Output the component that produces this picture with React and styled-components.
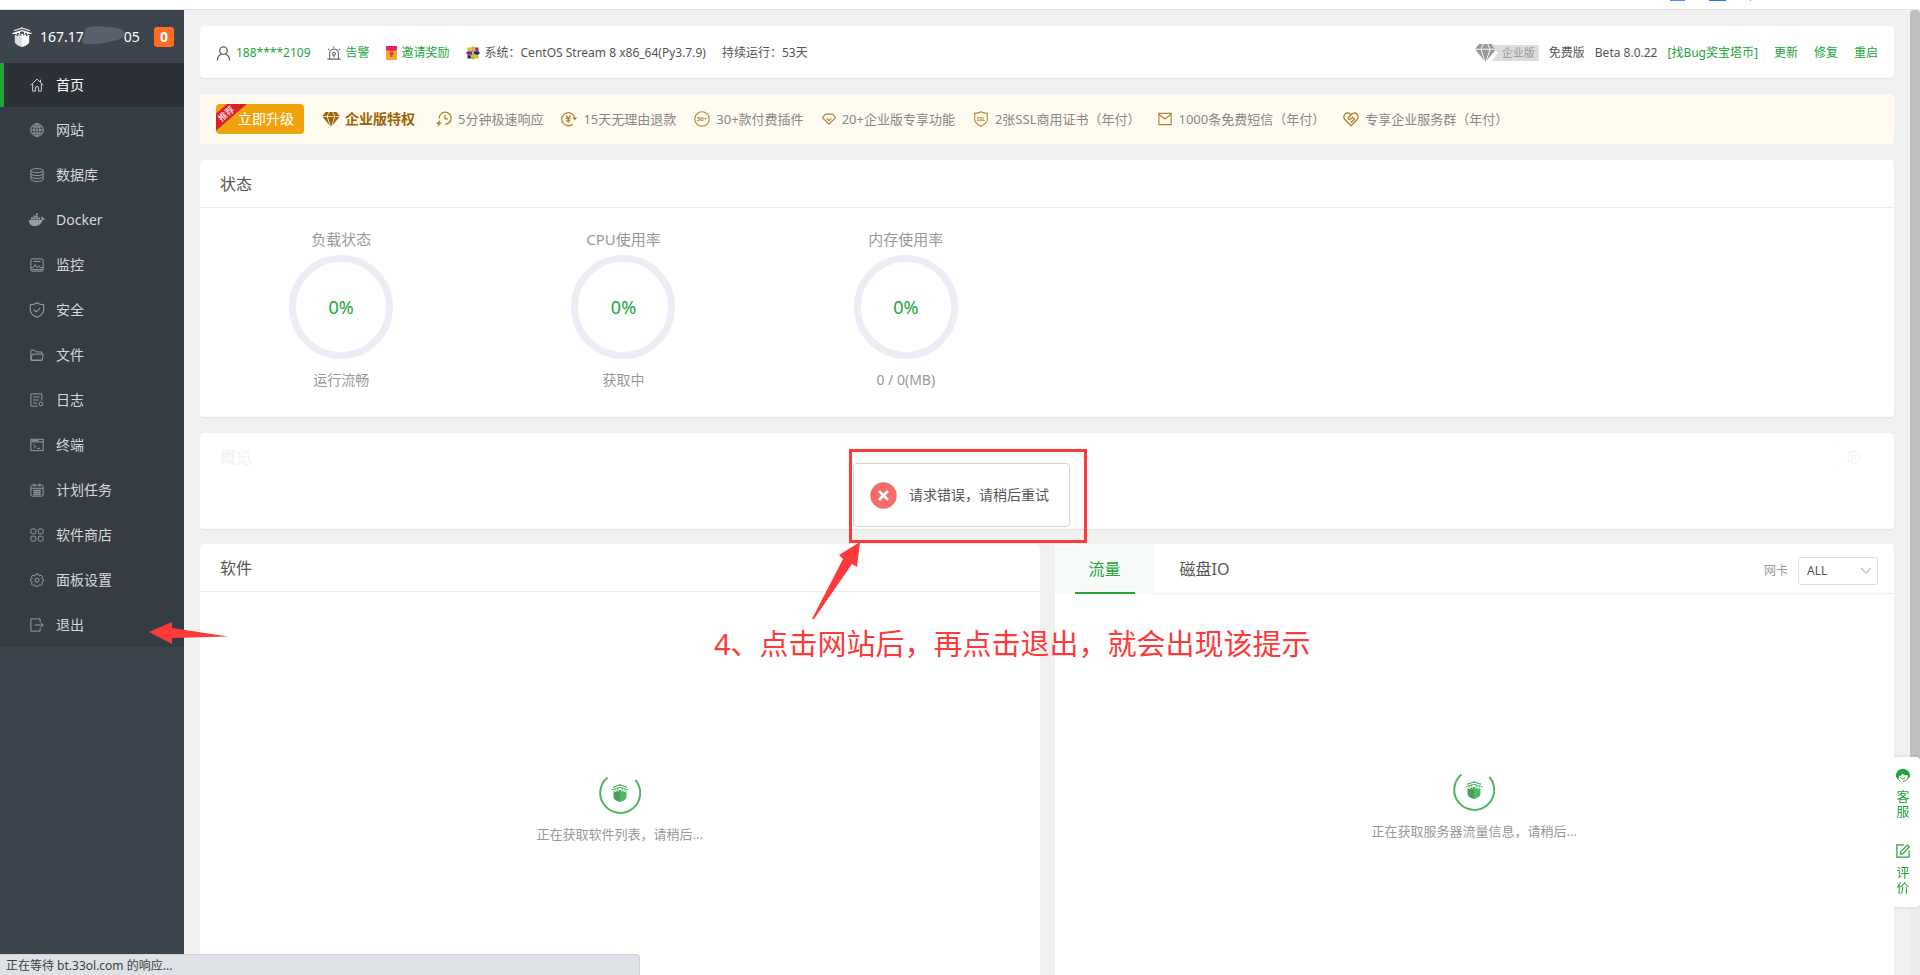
import React from "react";
import styled, { createGlobalStyle, css } from "styled-components";

const GlobalStyle = createGlobalStyle`
  * { box-sizing: border-box; }
  html, body { margin: 0; padding: 0; }
  body {
    background: #f1f1f1;
    color: #555;
    font: 12px/20px "Noto Sans", "Noto Sans CJK SC", sans-serif;
    overflow: hidden;
  }
  a { color: inherit; text-decoration: none; }
  button, select { font: inherit; color: inherit; }
  button { border: 0; padding: 0; background: none; cursor: pointer; }
  h1, h2, p, ul { margin: 0; padding: 0; font-weight: 400; }
  ul { list-style: none; }
  svg { display: block; flex: none; }
`;

/* ---------- frame ---------- */

const Shell = styled.div`
  position: relative;
  display: flex;
  flex-direction: column;
  height: 100vh;
  overflow: hidden;
`;

const BrowserEdge = styled.div`
  flex: none;
  display: flex;
  justify-content: flex-end;
  align-items: flex-start;
  gap: 24px;
  height: 10px;
  padding-right: 169px;
  background: #fff;
  border-bottom: 1px solid #e2e2e2;
`;

const EdgeMark = styled.span`
  width: ${(p) => p.$width}px;
  height: 1px;
  background: ${(p) => p.$color};
`;

const Body = styled.div`
  flex: 1;
  min-height: 0;
  display: flex;
`;

const Sidebar = styled.nav`
  flex: none;
  width: 184px;
  background: #3c444d;
  color: #d5d7d9;
  font-size: 14px;
`;

const ServerHead = styled.div`
  position: relative;
  display: flex;
  align-items: center;
  gap: 8px;
  height: 53px;
  padding: 0 10px 0 12px;
  color: #fff;
`;

const ServerIp = styled.span`
  flex: 1;
  white-space: nowrap;
`;

const Masked = styled.span`
  display: inline-block;
  width: 40px;
`;

const Smudge = styled.svg`
  position: absolute;
  left: 81px;
  top: 15px;
`;

const CountBadge = styled.span`
  width: 20px;
  height: 20px;
  border-radius: 3px;
  background: #ff6e24;
  font-weight: 700;
  text-align: center;
`;

const Menu = styled.ul`
  background: #353d44;
`;

const MenuLink = styled.a`
  display: flex;
  align-items: center;
  gap: 12px;
  height: 44px;
  margin-bottom: 1px;
  padding-left: 26px;
  border-left: 4px solid transparent;
  ${(p) =>
    p.$active &&
    css`
      color: #fff;
      background: #2c3138;
      border-left-color: #20a53a;
    `}
  svg { color: ${(p) => (p.$active ? "#d0d2d4" : "#9a9da0")}; }
`;

const MenuIcon = styled.span`
  display: flex;
  justify-content: center;
  width: 14px;
`;

const Main = styled.main`
  flex: 1;
  min-width: 0;
  display: flex;
  flex-direction: column;
  gap: 16px;
  padding: 16px;
  overflow: hidden;
`;

const ScrollRail = styled.div`
  flex: none;
  width: 10px;
  background: #ededed;
`;

const ScrollThumb = styled.div`
  height: 80%;
  border-radius: 4px 4px 0 0;
  background: #bfbfbf;
`;

/* ---------- cards ---------- */

const Card = styled.section`
  flex: none;
  background: #fff;
  border-radius: 4px;
  box-shadow: 0 1px 1px rgba(0, 0, 0, 0.05);
`;

const InfoBar = styled(Card)`
  display: flex;
  justify-content: space-between;
  align-items: center;
  height: 52px;
  padding: 2px 16px 0;
`;

const InfoGroup = styled.div`
  display: flex;
  align-items: center;
  gap: ${(p) => p.$gap}px;
  white-space: nowrap;
`;

const InfoItem = styled.span`
  display: flex;
  align-items: center;
  gap: 5px;
`;

const GreenLink = styled.a`
  color: #20a53a;
`;

const EditionBadge = styled.span`
  display: flex;
  align-items: center;
  color: #999;
`;

const EditionName = styled.span`
  height: 16px;
  padding: 0 4px 0 10px;
  margin-left: -4px;
  background: #dcdcdc;
  clip-path: polygon(0 0, 100% 0, 100% 100%, 0 100%, 6px 50%);
  font-size: 11px;
  line-height: 16px;
`;

const PromoBar = styled(Card)`
  display: flex;
  align-items: center;
  gap: 18px;
  height: 50px;
  padding: 0 16px;
  background: #fffbf0;
  box-shadow: none;
  color: #888;
  font-size: 13px;
  white-space: nowrap;
`;

const UpgradeButton = styled.button`
  position: relative;
  width: 88px;
  height: 30px;
  padding-left: 12px;
  border-radius: 4px;
  background: #f0a30c;
  color: #fff;
  font-size: 14px;
  overflow: hidden;
`;

const Ribbon = styled.span`
  position: absolute;
  left: -18px;
  top: 3px;
  width: 56px;
  height: 13px;
  background: #d8232f;
  font-size: 9px;
  line-height: 13px;
  text-align: center;
  transform: rotate(-41deg);
`;

const PromoTitle = styled.strong`
  display: flex;
  align-items: center;
  gap: 5px;
  margin-right: 3px;
  color: #9c6404;
  font-size: 14px;
`;

const PromoItem = styled.span`
  display: flex;
  align-items: center;
  gap: 6px;
  svg { color: #b0842f; }
`;

const CardHead = styled.header`
  display: flex;
  align-items: center;
  justify-content: space-between;
  height: ${(p) => (p.$tabs ? 50 : 48)}px;
  padding: ${(p) => (p.$tabs ? "0 16px 0 0" : "0 20px")};
  border-bottom: 1px solid ${(p) => (p.$faded ? "#fbfbfb" : "#ececec")};
`;

const CardTitle = styled.h2`
  font-size: 16px;
  line-height: 24px;
  color: ${(p) => (p.$faded ? "#f1f1f1" : "#555")};
`;

const Gauges = styled.div`
  display: grid;
  grid-template-columns: repeat(6, 1fr);
  padding: 19px 0 26px;
`;

const Gauge = styled.div`
  display: flex;
  flex-direction: column;
  align-items: center;
  color: #999;
`;

const GaugeName = styled.span`
  font-size: 15px;
  line-height: 24px;
`;

const GaugeRing = styled.div`
  display: flex;
  align-items: center;
  justify-content: center;
  width: 104px;
  height: 104px;
  margin: 4px 0 10px;
  border: 7px solid #ebeef5;
  border-radius: 50%;
  color: #20a53a;
  font-size: 18px;
`;

const GaugeNote = styled.span`
  font-size: 14px;
  line-height: 22px;
`;

const OverviewBody = styled.div`
  height: 48px;
`;

const GhostButton = styled.button`
  display: flex;
  align-items: center;
  justify-content: center;
  width: 40px;
  height: 32px;
  border: 1px solid #fbfbfb;
  border-radius: 4px;
  color: #ededed;
`;

const Columns = styled.div`
  flex: none;
  display: flex;
  gap: 15px;
  margin-top: -1px;
`;

const Half = styled(Card)`
  flex: 1;
  min-width: 0;
  overflow: hidden;
`;

const Tabs = styled.div`
  display: flex;
  align-self: stretch;
`;

const Tab = styled.button`
  display: flex;
  justify-content: center;
  width: 100px;
  height: 50px;
  padding: 0 20px;
  font-size: 16px;
  line-height: 50px;
  background: ${(p) => (p.$active ? "#f7fcf8" : "none")};
  color: ${(p) => (p.$active ? "#20a53a" : "#555")};
`;

const TabText = styled.span`
  flex: 1;
  border-bottom: 2px solid ${(p) => (p.$active ? "#20a53a" : "transparent")};
`;

const NetPicker = styled.label`
  display: flex;
  align-items: center;
  gap: 10px;
  padding-top: 4px;
  color: #999;
`;

const SelectBox = styled.span`
  display: grid;
  align-items: center;
  color: #c0c4cc;
  > * { grid-area: 1 / 1; }
  svg { justify-self: end; margin-right: 6px; pointer-events: none; }
`;

const Select = styled.select`
  appearance: none;
  width: 80px;
  height: 28px;
  padding: 0 8px;
  border: 1px solid #dcdfe6;
  border-radius: 2px;
  background: #fff;
  color: #555;
`;

const LoadingArea = styled.div`
  display: flex;
  flex-direction: column;
  align-items: center;
  justify-content: center;
  gap: 10px;
  height: ${(p) => p.$height}px;
  color: #999;
  font-size: 13px;
`;

/* ---------- overlays ---------- */

const SideDock = styled.aside`
  position: fixed;
  right: 0;
  bottom: 68px;
  display: flex;
  flex-direction: column;
  gap: 25px;
  width: 26px;
  height: 150px;
  padding: 12px 10px 0 2px;
  background: #fff;
  border-radius: 0 4px 4px 0;
  box-shadow: 0 0 4px rgba(0, 0, 0, 0.12);
  clip-path: inset(-6px 0 -6px 0);
`;

const DockLink = styled.a`
  display: flex;
  flex-direction: column;
  align-items: center;
  gap: 7px;
  color: #20a53a;
  font-size: 13px;
  line-height: 15px;
`;

const Toast = styled.div`
  position: fixed;
  left: 853px;
  top: 463px;
  display: flex;
  align-items: center;
  gap: 12px;
  width: 217px;
  height: 64px;
  padding-left: 16px;
  background: #fff;
  border: 1px solid #d5d5d5;
  border-radius: 4px;
  font-size: 14px;
  white-space: nowrap;
`;

const MarkFrame = styled.div`
  position: absolute;
  left: 849px;
  top: 449px;
  width: 238px;
  height: 94px;
  border: 3px solid #fd3a3a;
`;

const MarkArrow = styled.svg`
  position: absolute;
  left: ${(p) => p.$x}px;
  top: ${(p) => p.$y}px;
  fill: #fd3a3a;
`;

const MarkText = styled.p`
  position: absolute;
  left: 714px;
  top: 624px;
  color: #fd3a3a;
  font-size: 29px;
  line-height: 40px;
  white-space: nowrap;
`;

const StatusBubble = styled.div`
  position: fixed;
  left: 0;
  bottom: 0;
  width: 640px;
  height: 21px;
  padding-left: 6px;
  background: #dee1e6;
  border: solid #cfd2d6;
  border-width: 1px 1px 0 0;
  border-radius: 0 4px 0 0;
  color: #3c4043;
  line-height: 22px;
`;

/* ---------- icons ---------- */

const Line = ({ size = 14, box = 16, children, ...rest }) => (
  <svg width={size} height={size} viewBox={`0 0 ${box} ${box}`} fill="none" stroke="currentColor" strokeWidth="1.1" aria-hidden="true" {...rest}>
    {children}
  </svg>
);

const Logo = ({ light, dark, size = 20 }) => (
  <svg width={size} height={size} viewBox="0 0 20 20" aria-hidden="true">
    <path d="M2 3.600L10 1.200l8 2.400M10 0v1.500" fill="none" stroke={dark} strokeWidth="1.200" />
    <path d="M.5 6.600L10 3.700l9.500 2.900M4.500 5v2.500M15.500 5v2.500M7.500 4v3.500M12.500 4v3.500" fill="none" stroke={light} strokeWidth="1.100" />
    <path d="M2.800 8h1.700v.9h1.300V7.400h1.700v1h1.200V6.800H10V20c-3-.7-7.200-2.600-7.200-5.500z" fill={dark} />
    <path d="M17.200 8h-1.700v.9h-1.300V7.400h-1.700v1h-1.200V6.800H10V20c3-.7 7.200-2.600 7.200-5.500z" fill={light} />
  </svg>
);

const gear =
  "M6.700 1h2.600l.6 1.800 1 .4 1.700-.8 1.800 1.800-.8 1.700.4 1 1.700.6v1.800l-1.700.6-.4 1 .8 1.700-1.800 1.800-1.700-.8-1 .4-.6 1.700H6.700l-.6-1.700-1-.4-1.700.8-1.800-1.800.8-1.700-.4-1L.5 9.300V7.500L2 6.900l.4-1-.8-1.700 1.800-1.800 1.700.8 1-.4z";

const icons = {
  home: <Line><path d="M.7 8.300L8 1.200l7.300 7.100M3 6.500V15h3.200v-3.500a1.800 1.800 0 013.600 0V15H13V6.500M12 2v2.700" /></Line>,
  globe: (
    <Line>
      <circle cx="8" cy="8" r="7.200" />
      <ellipse cx="8" cy="8" rx="3.400" ry="7.200" />
      <path d="M.8 8h14.400M8 .8v14.400M2 4.400h12M2 11.600h12" />
    </Line>
  ),
  database: (
    <Line>
      <ellipse cx="8" cy="3" rx="7" ry="2.300" />
      <path d="M1 3v10c0 3 14 3 14 0V3M1 6.400c0 3 14 3 14 0M1 9.700c0 3 14 3 14 0" />
    </Line>
  ),
  docker: (
    <svg width="16" height="14" viewBox="0 0 16 14" fill="currentColor" aria-hidden="true">
      <path d="M0 7h11.500c.8 0 1.300-.3 1.500-.8-.8-.8-.7-2 0-2.900.8.500 1.200 1.200 1.200 1.900.7-.1 1.300 0 1.800.4-.4 1-1.300 1.400-2.300 1.300C12.500 10.500 9.800 13 5.500 13 2 13-.2 11 0 7zM2 4.600h2v1.800H2zM4.400 4.600h2v1.800h-2zM6.800 4.600h2v1.800h-2zM9.200 4.600h2v1.800h-2zM4.400 2.500h2v1.700h-2zM6.800 2.500h2v1.700h-2zM6.800.5h2v1.600h-2z" />
    </svg>
  ),
  monitor: <Line><rect x="1" y="1" width="14" height="14" rx="1.500" /><path d="M4 4h8M1 11h2.500L6 7.500l2 3.500 2-2 1.500 2H15M1.500 13.300h13" /></Line>,
  shield: <Line size={16}><path d="M8 .8c2 1.500 4.300 2 6.700 2v5c0 3.500-2.700 6-6.700 7.500-4-1.500-6.700-4-6.700-7.500v-5c2.400 0 4.700-.5 6.700-2zM5 7.700L7.300 10 11 6" /></Line>,
  folder: <Line><path d="M1 14V2.500h4.500L7 4.500h6.500V7M1 14L2.500 7H15l-1 7zM1.500 14H14" /></Line>,
  log: <Line><path d="M8.500 15H1V1h12.500v7.500M3.500 4.500H11M3.500 8H10M3.500 11.500H8" /><circle cx="12.500" cy="12.500" r="2.200" /></Line>,
  terminal: <Line><rect x="1" y="1.500" width="14" height="13" /><path d="M1 4.500h14M2 3h8M4 7.500l2.500 2L4 11.500M8 11.800h3.500" /></Line>,
  calendar: <Line><rect x="1" y="2.500" width="14" height="12.500" rx="1.500" /><path d="M1 6h14M4.800.5v3.500M11.200.5v3.500M3.500 8.500h9M3.500 10.700h9M3.500 13h9M5.500 7.500V14M8 7.500V14M10.500 7.500V14" /></Line>,
  apps: (
    <Line>
      <rect x="1" y="1" width="5.600" height="5.600" rx="1.800" />
      <rect x="9.400" y="1" width="5.600" height="5.600" rx="1.800" />
      <rect x="1" y="9.400" width="5.600" height="5.600" rx="1.800" />
      <rect x="9.400" y="9.400" width="5.600" height="5.600" rx="1.800" />
    </Line>
  ),
  gear: <Line><path d={gear} /><circle cx="8" cy="8.300" r="2.300" /></Line>,
  exit: <Line><path d="M11.500 4.500V1H1v14h10.500v-3.500M5.500 8H15M12 5l3 3-3 3" /></Line>,
  fast: (
    <Line size={16} strokeWidth="1.300">
      <path d="M3.200 7.500A6 6 0 119 13.200M9 3.800v4h3" />
      <path d="M4.500 8.500L0 13h2.500l-1 3L6 11.500H3.500z" fill="currentColor" stroke="none" />
    </Line>
  ),
  refund: (
    <Line size={16} strokeWidth="1.300">
      <path d="M11.500 13.200A6.500 6.500 0 1113.700 7M5 4.500L7.300 7.500 9.600 4.500M5 7.700h4.600M5 9.800h4.600M7.300 7.500v4.200" />
      <path d="M11.500 6.500H16L13.800 9.500z" fill="currentColor" stroke="none" />
    </Line>
  ),
  plugins: (
    <Line size={16}>
      <circle cx="8" cy="8" r="7.300" />
      <text x="8" y="10.300" textAnchor="middle" fontSize="6" fontWeight="700" fill="currentColor" stroke="none">30+</text>
    </Line>
  ),
  gem: <Line size={14} strokeWidth="1.300"><path d="M4 2.500h8l3.500 4L8 14 .5 6.500zM5.200 7.200L8 9.700l2.800-2.500" /></Line>,
  ssl: (
    <Line size={16}>
      <path d="M8 .8c2 1.300 4 1.500 6.300 1.500v6.500c0 3-3 4.800-6.300 6.500-3.300-1.700-6.300-3.500-6.300-6.500V2.300C4 2.300 6 2.100 8 .8z" />
      <text x="8" y="9.800" textAnchor="middle" fontSize="5" fontWeight="700" fill="currentColor" stroke="none">SSL</text>
    </Line>
  ),
  mail: <Line strokeWidth="1.300"><path d="M1 1.500h14v13H1zM1 2.500l7 5.500 7-5.500" /></Line>,
  heart: <Line size={16} strokeWidth="1.300"><path d="M8 14.800L1.800 8.500C-.5 5.500 2 1.500 5 2c1.300.2 2.300.8 3 1.800C9 2.500 10 2 11 2c3.200-.3 5.300 3.500 3.200 6.500zM8 3.800L5.500 6.500c-.8 1.500 1 2.500 2 1.500l2-1.700 2 2L8 11.500" /></Line>,
};

const Diamond = ({ width, height }) => (
  <svg width={width} height={height} viewBox="0 0 20 17" fill="currentColor" aria-hidden="true">
    <path d="M4 0h3.500L5.300 4.500H.3zM8.400 0h3.200l2.200 4.500H6.200zM12.500 0H16l3.700 4.500h-5zM.3 5.500h5l3.500 10.200zM6.300 5.500h7.400L10 17zM14.700 5.500h5l-8.500 10.200z" />
  </svg>
);

const UserIcon = () => (
  <Line size={15} strokeWidth="1.400" color="#666">
    <circle cx="8" cy="5" r="4" />
    <path d="M1.500 15.500c0-3.500 2-6 4.500-6.800M14.500 15.500c0-3.500-2-6-4.500-6.800" />
  </Line>
);

const AlarmIcon = () => (
  <Line size={14} color="#666" strokeWidth="1.200">
    <path d="M.5 15h15M3 15V8.500a5 5 0 0110 0V15M8 .3v2M1 3.500l1.800 1M15 3.500l-1.800 1M8 10v3" />
    <circle cx="8" cy="8.800" r="1.600" />
  </Line>
);

const EnvelopeIcon = () => (
  <svg width="11" height="14" viewBox="0 0 11 14" aria-hidden="true">
    <rect width="11" height="14" rx="1" fill="#f7a52b" />
    <path d="M0 0h11v3.500C8 5.500 3 5.500 0 3.500z" fill="#e6216a" />
    <path d="M5.500 5.500a2 2 0 012 2c0 1-.8 1.300-1 2v1.500h-2V9.500c-.2-.7-1-1-1-2a2 2 0 012-2z" fill="#e23b3b" />
  </svg>
);

const CentosIcon = () => (
  <svg width="14" height="14" viewBox="0 0 14 14" aria-hidden="true">
    <path d="M1.500 1.500h5v5h-5z" fill="#9ccd2a" />
    <path d="M7.500 1.500h5v5h-5z" fill="#932279" />
    <path d="M1.500 7.500h5v5h-5z" fill="#262577" />
    <path d="M7.500 7.500h5v5h-5z" fill="#efa724" />
    <path d="M7 0l2 2v4.200H5V2z" fill="#efa724" />
    <path d="M14 7l-2 2H7.800V5H12z" fill="#262577" />
    <path d="M7 14l-2-2V7.800h4V12z" fill="#9ccd2a" />
    <path d="M0 7l2-2h4.200v4H2z" fill="#932279" />
    <path d="M5 1.500v4M9 1.500v4M5 8.500v4M9 8.500v4M1.500 5h4M1.500 9h4M8.500 5h4M8.500 9h4" stroke="#fff" strokeWidth=".4" />
  </svg>
);

const Spinner = () => (
  <svg width="42" height="42" viewBox="0 0 42 42" aria-hidden="true">
    <path d="M8.500 5.500A20 20 0 1036.500 8" fill="none" stroke="#4cb761" strokeWidth="2" />
    <svg x="12" y="11" width="18" height="20" viewBox="0 0 20 20">
      <Logo light="#4fba62" dark="#4a9f5b" />
    </svg>
  </svg>
);

const ErrorIcon = () => (
  <svg width="27" height="27" viewBox="0 0 27 27" aria-hidden="true">
    <circle cx="13.500" cy="13.500" r="13.200" fill="#f76b6b" />
    <path d="M9 9l9 9M18 9l-9 9" stroke="#fff" strokeWidth="2.600" />
  </svg>
);

const ServiceIcon = () => (
  <svg width="14" height="13" viewBox="0 0 14 13" aria-hidden="true">
    <path d="M0 7C0 2.500 3 0 7 0s7 2.500 7 7c0 1-.4 2-1.300 2H12V6.500C9.500 6.500 7.500 5.800 6.500 4.800 5.500 6.300 4.500 7 3 7v2H1.300C.4 9 0 8 0 7z" fill="#20a53a" />
    <path d="M4.500 8.500c1 1.500 3 1.500 4.500.5M1.500 9c.7 1.500 1.700 2.700 3 3.300M12 8.500c-.5 2.300-2.300 3.800-5 3.800" fill="none" stroke="#20a53a" />
  </svg>
);

const EditIcon = () => (
  <Line size={14} strokeWidth="1.400">
    <path d="M9 1H1v14h14V7.500M5 11.500l.6-3L13 1.200 15.200 3.300 8 10.800z" />
  </Line>
);

/* ---------- data ---------- */

const menu = [
  ["home", "首页"],
  ["globe", "网站"],
  ["database", "数据库"],
  ["docker", "Docker"],
  ["monitor", "监控"],
  ["shield", "安全"],
  ["folder", "文件"],
  ["log", "日志"],
  ["terminal", "终端"],
  ["calendar", "计划任务"],
  ["apps", "软件商店"],
  ["gear", "面板设置"],
  ["exit", "退出"],
];

const perks = [
  ["fast", "5分钟极速响应"],
  ["refund", "15天无理由退款"],
  ["plugins", "30+款付费插件"],
  ["gem", "20+企业版专享功能"],
  ["ssl", "2张SSL商用证书（年付）"],
  ["mail", "1000条免费短信（年付）"],
  ["heart", "专享企业服务群（年付）"],
];

const gauges = [
  ["负载状态", "运行流畅"],
  ["CPU使用率", "获取中"],
  ["内存使用率", "0 / 0(MB)"],
];

export default function App() {
  return (
    <>
      <GlobalStyle />
      <Shell>
        <BrowserEdge>
          <EdgeMark $width={15} $color="#4a90ff" />
          <EdgeMark $width={17} $color="#1a7df5" />
          <EdgeMark $width={1} $color="#35c98e" />
        </BrowserEdge>
        <Body>
          <Sidebar>
            <ServerHead>
              <Logo light="#ffffff" dark="#dddddd" />
              <ServerIp>
                167.17<Masked />05
              </ServerIp>
              <Smudge width="46" height="21" viewBox="0 0 48 22" aria-hidden="true">
                <path d="M5 4c3-3 14-3 22-2 8 0 18 2 19 6 1 5-6 8-14 9-8 2-20 4-28 3-5-1-3-5-1-8 2-3 0-6 2-8z" fill="#59606a" />
              </Smudge>
              <CountBadge>0</CountBadge>
            </ServerHead>
            <Menu>
              {menu.map(([icon, name], i) => (
                <li key={name}>
                  <MenuLink href="#" $active={i === 0}>
                    <MenuIcon>{icons[icon]}</MenuIcon>
                    {name}
                  </MenuLink>
                </li>
              ))}
            </Menu>
          </Sidebar>

          <Main>
            <InfoBar>
              <InfoGroup $gap={16}>
                <InfoItem><UserIcon /><GreenLink href="#">188****2109</GreenLink></InfoItem>
                <InfoItem><AlarmIcon /><GreenLink href="#">告警</GreenLink></InfoItem>
                <InfoItem><EnvelopeIcon /><GreenLink href="#">邀请奖励</GreenLink></InfoItem>
                <InfoItem><CentosIcon />系统：CentOS Stream 8 x86_64(Py3.7.9)</InfoItem>
                <span>持续运行：53天</span>
              </InfoGroup>
              <InfoGroup $gap={16}>
                <InfoGroup $gap={10}>
                  <EditionBadge>
                    <Diamond width={21} height={18} />
                    <EditionName>企业版</EditionName>
                  </EditionBadge>
                  <span>免费版</span>
                  <span>Beta 8.0.22</span>
                  <GreenLink href="#">[找Bug奖宝塔币]</GreenLink>
                </InfoGroup>
                <GreenLink href="#">更新</GreenLink>
                <GreenLink href="#">修复</GreenLink>
                <GreenLink href="#">重启</GreenLink>
              </InfoGroup>
            </InfoBar>

            <PromoBar>
              <UpgradeButton type="button">
                <Ribbon>推荐</Ribbon>立即升级
              </UpgradeButton>
              <PromoTitle>
                <Diamond width={18} height={15} />
                企业版特权
              </PromoTitle>
              {perks.map(([icon, name]) => (
                <PromoItem key={name}>
                  {icons[icon]}
                  {name}
                </PromoItem>
              ))}
            </PromoBar>

            <Card>
              <CardHead><CardTitle>状态</CardTitle></CardHead>
              <Gauges>
                {gauges.map(([name, note]) => (
                  <Gauge key={name}>
                    <GaugeName>{name}</GaugeName>
                    <GaugeRing>0%</GaugeRing>
                    <GaugeNote>{note}</GaugeNote>
                  </Gauge>
                ))}
              </Gauges>
            </Card>

            <Card>
              <CardHead $faded>
                <CardTitle $faded>概览</CardTitle>
                <GhostButton type="button" aria-label="设置">{icons.gear}</GhostButton>
              </CardHead>
              <OverviewBody />
            </Card>

            <Columns>
              <Half>
                <CardHead><CardTitle>软件</CardTitle></CardHead>
                <LoadingArea $height={432}>
                  <Spinner />
                  <span>正在获取软件列表，请稍后...</span>
                </LoadingArea>
              </Half>
              <Half>
                <CardHead $tabs>
                  <Tabs>
                    <Tab type="button" $active><TabText $active>流量</TabText></Tab>
                    <Tab type="button"><TabText>磁盘IO</TabText></Tab>
                  </Tabs>
                  <NetPicker>
                    网卡
                    <SelectBox>
                      <Select defaultValue="ALL"><option>ALL</option></Select>
                      <svg width="12" height="8" viewBox="0 0 12 8" fill="none" stroke="currentColor" strokeWidth="1.300" aria-hidden="true">
                        <path d="M1 1l5 5 5-5" />
                      </svg>
                    </SelectBox>
                  </NetPicker>
                </CardHead>
                <LoadingArea $height={422}>
                  <Spinner />
                  <span>正在获取服务器流量信息，请稍后...</span>
                </LoadingArea>
              </Half>
            </Columns>
          </Main>

          <ScrollRail><ScrollThumb /></ScrollRail>
        </Body>

        <SideDock>
          <DockLink href="#"><ServiceIcon /><span>客<br />服</span></DockLink>
          <DockLink href="#"><EditIcon /><span>评<br />价</span></DockLink>
        </SideDock>

        <Toast role="alert">
          <ErrorIcon />
          请求错误，请稍后重试
        </Toast>

        <MarkFrame />
        <MarkArrow $x={811} $y={542} width="50" height="80" viewBox="0 0 50 80" aria-hidden="true">
          <path d="M49 0L46 25 41 22 3 77 1 77 32 17 28 13z" />
        </MarkArrow>
        <MarkArrow $x={149} $y={621} width="80" height="24" viewBox="0 0 80 24" aria-hidden="true">
          <path d="M0 11L23 1V7L79 15.500 23 17V23z" />
        </MarkArrow>
        <MarkText>4、点击网站后，再点击退出，就会出现该提示</MarkText>

        <StatusBubble>正在等待 bt.33ol.com 的响应...</StatusBubble>
      </Shell>
    </>
  );
}
